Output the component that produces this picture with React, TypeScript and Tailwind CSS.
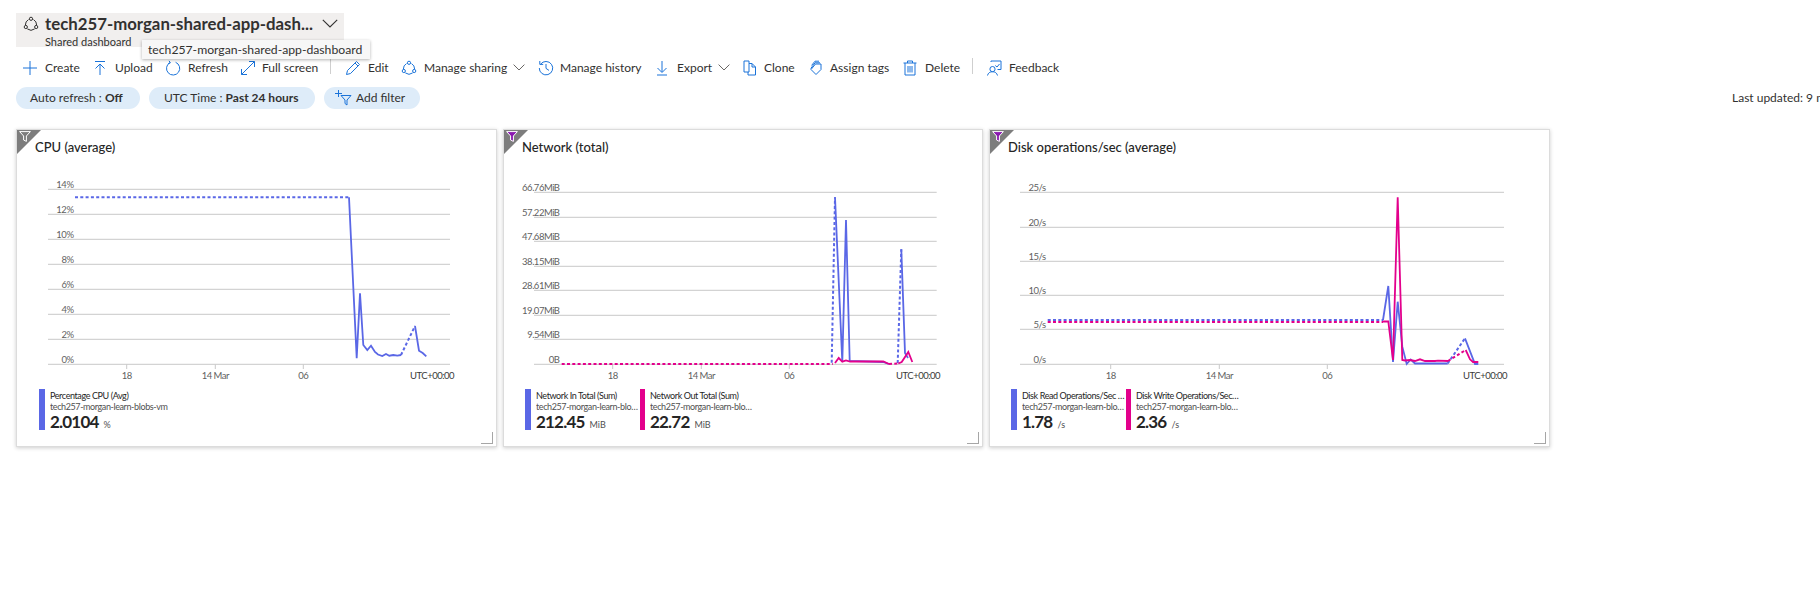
import React from "react";

const BLUE = "#5a67e6";
const PINK = "#e3008c";
const P = "#1a73d9";
const FONT = "Lato,'Noto Sans',sans-serif";

type Pt = [number, number];
const pts = (a: Pt[], ox: number, oy: number) => a.map(([x, y]) => `${(x - ox).toFixed(1)},${(y - oy).toFixed(1)}`).join(" ");

type Seg = { c: string; d?: boolean; p: Pt[] };
type ChartDef = {
  ox: number; w: number;
  x1: number; x2: number;
  grid: [string, number][];
  ticks: [string, number][];
  utc: number;
  segs: Seg[];
};

function Chart({ def }: { def: ChartDef }) {
  const oy = 170;
  const { ox } = def;
  return (
    <svg width={def.w} height={216} className="block" style={{ fontFamily: FONT, letterSpacing: "-0.5px" }}>
      {def.grid.map(([l, y]) => (
        <g key={l}>
          <line x1={def.x1 - ox} x2={def.x2 - ox} y1={y - oy} y2={y - oy} stroke="#c9c9c9" strokeWidth={1} />
          <text x={def.x1 - ox + 25.5} y={y - oy - 1.5} textAnchor="end" fontSize={9.5} fill="#5f5f5f">{l}</text>
        </g>
      ))}
      {def.ticks.map(([l, x]) => (
        <g key={l}>
          <line x1={x - ox} x2={x - ox} y1={364.3 - oy} y2={369 - oy} stroke="#c9c9c9" />
          <text x={x - ox} y={379 - oy} textAnchor="middle" fontSize={9.5} fill="#5f5f5f">{l}</text>
        </g>
      ))}
      <text x={def.utc - ox} y={379 - oy} fontSize={9.5} fill="#3a3a3a">UTC+00:00</text>
      {def.segs.map((s, i) => (
        <polyline
          key={i}
          points={pts(s.p, ox, oy)}
          fill="none"
          stroke={s.c}
          strokeWidth={s.d ? 2 : 1.8}
          strokeDasharray={s.d ? "3 2.300" : undefined}
          strokeLinejoin="miter"
        />
      ))}
    </svg>
  );
}

function Legend({ color, w, name, res, value, unit, barW }: { color: string; w: string; name: string; res: string; value: string; unit: string; barW: string }) {
  return (
    <div className={`flex h-[41px] shrink-0 ${w}`}>
      <div className={`h-full shrink-0 ${barW}`} style={{ background: color }} />
      <div className="ml-[5px] min-w-0 flex-1 pr-[1px]">
        <div className="mt-[1px] truncate text-[9px] leading-[11px] tracking-[-0.4px] text-[#252525]">{name}</div>
        <div className="truncate text-[9px] leading-[11px] tracking-[-0.4px] text-[#505050]">{res}</div>
        <div className="mt-[1px] flex items-baseline whitespace-nowrap leading-[18px]">
          <span className="text-[17px] font-bold tracking-[-0.8px] text-[#252525]">{value}</span>
          <span className="ml-[5px] text-[9px] text-[#505050]">{unit}</span>
        </div>
      </div>
    </div>
  );
}

function Funnel({ purple }: { purple?: boolean }) {
  return (
    <svg width="12" height="11" viewBox="0 0 12 11" className="absolute left-[2px] top-[1px]">
      <path d="M.6.6h10.800L7.400 5v5.400L4.600 9V5z" fill={purple ? "#8a18b0" : "none"} stroke="#fff" strokeWidth={1} />
    </svg>
  );
}

function Card({ title, w, pl, purple, def, legends }: { title: string; w: string; pl: string; purple?: boolean; def: ChartDef; legends: React.ReactNode }) {
  return (
    <div className={`relative h-[318px] shrink-0 border border-[#dcdcdc] bg-white shadow-[0_1px_4px_rgba(0,0,0,0.2)] ${w}`}>
      <div className="absolute left-0 top-0 h-0 w-0 border-r-[24px] border-t-[24px] border-r-transparent border-t-[#7d7d7d]" />
      <Funnel purple={purple} />
      <div className="pl-[18px] pt-[7px] text-[13px] font-medium leading-[20px] text-[#252525]">{title}</div>
      <div className="mt-[13px]"><Chart def={def} /></div>
      <div className={`mt-[3px] flex ${pl}`}>{legends}</div>
      <div className="absolute bottom-[2px] right-[3px] h-[12px] w-[12px] border-b border-r border-[#a6a6a6]" />
    </div>
  );
}

const cpu: ChartDef = {
  ox: 17, w: 479, x1: 48, x2: 450,
  grid: [["14%", 189.3], ["12%", 214.3], ["10%", 239.3], ["8%", 264.3], ["6%", 289.3], ["4%", 314.3], ["2%", 339.3], ["0%", 364.3]],
  ticks: [["18", 126.7], ["14 Mar", 215.3], ["06", 303.3]],
  utc: 410,
  segs: [
    { c: BLUE, d: true, p: [[75, 197.3], [349, 197.3]] },
    { c: BLUE, p: [[349, 197.3], [356.7, 358.3], [360, 293.3], [363.3, 345], [367.3, 350], [371, 345.7], [375, 352], [378, 354.5], [382.3, 356], [386, 354], [389.3, 355.7], [393.3, 355], [397.3, 355.7], [401, 355]] },
    { c: BLUE, d: true, p: [[401, 355], [415, 326]] },
    { c: BLUE, p: [[415, 326], [419, 350.7], [422.7, 353], [426.3, 356.3]] },
  ],
};

const net: ChartDef = {
  ox: 504, w: 478, x1: 534, x2: 936.7,
  grid: [["66.76MiB", 192.3], ["57.22MiB", 217.3], ["47.68MiB", 241.3], ["38.15MiB", 266.3], ["28.61MiB", 290.3], ["19.07MiB", 315.3], ["9.54MiB", 339.3], ["0B", 364.3]],
  ticks: [["18", 612.7], ["14 Mar", 701.3], ["06", 789.3]],
  utc: 896,
  segs: [
    { c: BLUE, d: true, p: [[831.7, 362.7], [835, 197.3]] },
    { c: BLUE, p: [[835, 197.3], [842.3, 362], [846, 220], [849.7, 361], [883, 362], [889, 364]] },
    { c: BLUE, d: true, p: [[897.7, 363], [901.3, 249.3]] },
    { c: BLUE, p: [[901.3, 249.3], [905, 353], [908, 358]] },
    { c: PINK, d: true, p: [[561.7, 364], [832.7, 364]] },
    { c: PINK, p: [[835, 363], [838.7, 358], [842.3, 361.7], [846, 360.5], [850, 361.5], [883.3, 361.5], [889, 364]] },
    { c: PINK, d: true, p: [[889, 364], [898.3, 363.5]] },
    { c: PINK, p: [[898.3, 363.5], [901.7, 362], [908.3, 352], [912.3, 362]] },
  ],
};

const disk: ChartDef = {
  ox: 990, w: 559, x1: 1020, x2: 1504,
  grid: [["25/s", 192.3], ["20/s", 227.3], ["15/s", 261.3], ["10/s", 295.3], ["5/s", 329.3], ["0/s", 364.3]],
  ticks: [["18", 1110.7], ["14 Mar", 1219.3], ["06", 1327.3]],
  utc: 1463,
  segs: [
    { c: BLUE, d: true, p: [[1047.7, 320], [1383, 320]] },
    { c: PINK, d: true, p: [[1047.7, 322], [1383, 322]] },
    { c: BLUE, p: [[1383, 320], [1388.3, 286], [1393, 362], [1397.7, 301.7], [1402.3, 346.7], [1406.7, 364], [1410.7, 359.5], [1415, 363.5], [1447.7, 363.5]] },
    { c: BLUE, d: true, p: [[1447.7, 363.5], [1465, 338.3]] },
    { c: BLUE, p: [[1465, 338.3], [1475, 364], [1478.3, 364]] },
    { c: PINK, p: [[1383, 321.5], [1388.3, 321.5], [1393, 360], [1397.7, 197.3], [1402.3, 360], [1405, 360.5], [1410, 360], [1415, 361], [1420, 359.3], [1425, 361], [1435, 361], [1438, 360.7], [1448, 361]] },
    { c: PINK, d: true, p: [[1448, 361], [1465.7, 350]] },
    { c: PINK, p: [[1465.7, 350], [1470, 359.3], [1473, 362], [1478.3, 362]] },
  ],
};

const I = ({ children }: { children: React.ReactNode }) => (
  <svg width="16" height="16" viewBox="0 0 16 16" fill="none" stroke={P} strokeWidth="1" className="shrink-0">{children}</svg>
);

const Share = ({ c = P }: { c?: string }) => (
  <svg width="16" height="16" viewBox="0 0 16 16" fill="none" stroke={c} strokeWidth="1" className="shrink-0">
    <path d="M5.500 3.600A6 6 0 0 0 2.400 9M10.500 3.600A6 6 0 0 1 13.600 9M4.300 12.900a6 6 0 0 0 7.400 0" />
    <circle cx="8" cy="2.800" r="1.600" /><circle cx="2.800" cy="11" r="1.600" /><circle cx="13.200" cy="11" r="1.600" />
  </svg>
);

const Chevron = ({ w = 12, c = "#605e5c" }: { w?: number; c?: string }) => (
  <svg width={w} height={w * 0.6} viewBox="0 0 20 12" fill="none" stroke={c} strokeWidth={w > 14 ? 1.4 : 1.6} className="shrink-0"><path d="M1 1l9 9 9-9" /></svg>
);

const tools: { label: string; w: string; icon: React.ReactNode; gap: string; chev?: string; div?: string }[] = [
  { label: "Create", w: "w-[70px]", gap: "ml-[7px]", icon: <I><path d="M8 1v14M1 8h14" /></I> },
  { label: "Upload", w: "w-[73px]", gap: "ml-[7px]", icon: <I><path d="M3 1.500h10M8 15V4M3.500 8.500L8 4l4.500 4.500" /></I> },
  { label: "Refresh", w: "w-[75px]", gap: "ml-[7px]", icon: <I><path d="M5 2.600a6.600 6.600 0 1 0 5.600-.3M4 .8l1.400 2-2.200 1" /></I> },
  { label: "Full screen", w: "w-[105px]", gap: "ml-[6px]", icon: <I><path d="M1.500 14.500l13-13M9 1.500h5.500V7M1.500 9v5.500H7" /></I>, div: "right-[14px]" },
  { label: "Edit", w: "w-[56px]", gap: "ml-[7px]", icon: <I><path d="M1.500 14.500l1-4L11.500 1.500l3 3-9 9zM10 3l3 3" /></I> },
  { label: "Manage sharing", w: "w-[137px]", gap: "ml-[7px]", icon: <Share />, chev: "ml-[6px]" },
  { label: "Manage history", w: "w-[116px]", gap: "ml-[6px]", icon: <I><path d="M2.600 4.200A6.700 6.700 0 1 1 1.300 8M1.800 1v3.400h3.400M8 4v4.400l3 2" /></I> },
  { label: "Export", w: "w-[88px]", gap: "ml-[7px]", icon: <I><path d="M8 1v11M3.500 8L8 12.500 12.500 8M3 15h10" /></I>, chev: "ml-[6px]" },
  { label: "Clone", w: "w-[66px]", gap: "ml-[6px]", icon: <I><path d="M2 1h5v11H2zM7 3.500h3l3.500 3.500V15H6v-3M10 3.500V7h3.500" /></I> },
  { label: "Assign tags", w: "w-[94px]", gap: "ml-[6px]", icon: <I><path d="M7.500 4h5.500v5.500L8 14.500 3 9.500zM2.700 8.600L7 2.800h5M10.800 6.200h.01" /><path d="M3.600 5.400L7 1.200h4" /></I> },
  { label: "Delete", w: "w-[84px]", gap: "ml-[7px]", icon: <I><path d="M1.500 3h13M5.500 3V1h5v2M3 3v12h10V3M6 6v6.500M8 6v6.500M10 6v6.500" /></I>, div: "right-[13px]" },
  { label: "Feedback", w: "w-[70px]", gap: "ml-[7px]", icon: <I><path d="M5 2V1h10v8.500h-3.500M9.300 5.500L11 7l2.500-3M6.500 6.500a2.600 2.600 0 1 0 0 5.200 2.600 2.600 0 0 0 0-5.200zM1.500 15.500c.5-2.500 2.500-3.800 5-3.800s4.400 1.300 5 3.800" /></I> },
];

const Pill = ({ w, children }: { w: string; children: React.ReactNode }) => (
  <div className={`flex h-[22px] shrink-0 items-center rounded-full bg-[#deecf9] text-[12px] text-[#323130] ${w}`}>{children}</div>
);

export default function App() {
  return (
    <div className="relative h-[603px] w-[1820px] overflow-hidden bg-white" style={{ fontFamily: FONT }}>
      <div className="ml-[16px] pt-[13px]">
        <div className="flex h-[34px] w-[328px] bg-[#f1efee] pl-[7px]">
          <div className="mt-[3px]"><Share c="#323130" /></div>
          <div className="ml-[6px] min-w-0">
            <div className="flex items-center">
              <span className="w-[270px] whitespace-nowrap text-[16.8px] font-bold leading-[22px] text-[#323130]">tech257-morgan-shared-app-dash...</span>
              <span className="ml-[7px]"><Chevron w={16} c="#323130" /></span>
            </div>
            <div className="text-[11px] leading-[14px] text-[#323130]">Shared dashboard</div>
          </div>
        </div>
      </div>

      <div className="absolute left-[142px] top-[40px] z-10 h-[19px] w-[228px] whitespace-nowrap bg-[#f7f7f7] pl-[6px] text-[12.2px] leading-[19px] text-[#323130] shadow-[0_1px_3px_rgba(0,0,0,0.3)]">
        tech257-morgan-shared-app-dashboard
      </div>

      <div className="mt-[13px] flex h-[16px] items-center pl-[22px] text-[12px] text-[#323130]">
        {tools.map((t) => (
          <div key={t.label} className={`relative flex shrink-0 items-center whitespace-nowrap ${t.w}`}>
            {t.icon}
            <span className={t.gap}>{t.label}</span>
            {t.chev && <span className={t.chev}><Chevron /></span>}
            {t.div && <div className={`absolute top-[-1px] h-[16px] w-px bg-[#cfcfcf] ${t.div}`} />}
          </div>
        ))}
      </div>

      <div className="ml-[16px] mt-[11px] flex items-center">
        <Pill w="w-[124px]"><span className="whitespace-nowrap pl-[14px]">Auto refresh : <b className="font-bold">Off</b></span></Pill>
        <div className="w-[9px] shrink-0" />
        <Pill w="w-[166px]"><span className="whitespace-nowrap pl-[15px]">UTC Time : <b className="font-bold">Past 24 hours</b></span></Pill>
        <div className="w-[9px] shrink-0" />
        <Pill w="w-[96px]">
          <svg width="18" height="16" viewBox="0 0 18 16" fill="none" stroke={P} strokeWidth="1" className="ml-[10px] shrink-0">
            <path d="M4.500 0v7M1 3.500h7M7 5.500h10l-4 4.500v5l-2-1.500V10z" />
          </svg>
          <span className="ml-[4px] whitespace-nowrap">Add filter</span>
        </Pill>
        <div className="flex-1" />
        <div className="w-[88px] shrink-0 overflow-hidden whitespace-nowrap text-[12px] text-[#323130]">Last updated: 9 minutes ago</div>
      </div>

      <div className="ml-[16px] mt-[20px] flex gap-[6px]">
        <Card title="CPU (average)" w="w-[481px]" pl="pl-[22px]" def={cpu} legends={
          <Legend color={BLUE} w="w-[200px]" barW="w-[6px]" name="Percentage CPU (Avg)" res="tech257-morgan-learn-blobs-vm" value="2.0104" unit="%" />
        } />
        <Card title="Network (total)" w="w-[480px]" pl="pl-[21px]" purple def={net} legends={
          <>
            <Legend color={BLUE} w="w-[115px]" barW="w-[6px]" name="Network In Total (Sum)" res="tech257-morgan-learn-blobs-vm" value="212.45" unit="MiB" />
            <Legend color={PINK} w="w-[115px]" barW="w-[5px]" name="Network Out Total (Sum)" res="tech257-morgan-learn-blobs-vm" value="22.72" unit="MiB" />
          </>
        } />
        <Card title="Disk operations/sec (average)" w="w-[561px]" pl="pl-[21px]" purple def={disk} legends={
          <>
            <Legend color={BLUE} w="w-[115px]" barW="w-[6px]" name="Disk Read Operations/Sec (Avg)" res="tech257-morgan-learn-blobs-vm" value="1.78" unit="/s" />
            <Legend color={PINK} w="w-[115px]" barW="w-[5px]" name="Disk Write Operations/Sec (Avg)" res="tech257-morgan-learn-blobs-vm" value="2.36" unit="/s" />
          </>
        } />
      </div>
    </div>
  );
}
